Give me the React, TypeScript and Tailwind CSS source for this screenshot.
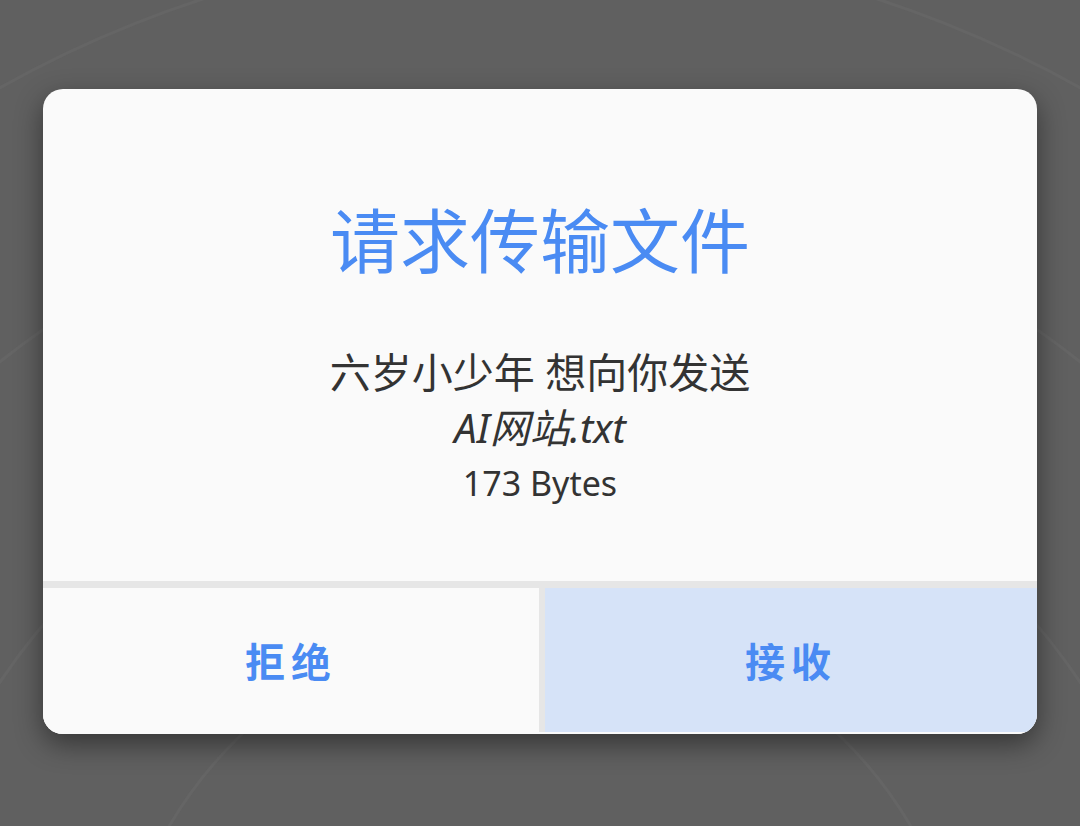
export default function App() {
  return (
    <div className="relative min-h-[826px] w-[1080px] overflow-hidden bg-[#606060] font-['Noto_Sans','Noto_Sans_CJK_SC',sans-serif]">
      {/* faint concentric rings behind the dialog */}
      <svg className="absolute inset-0" width="1080" height="826" viewBox="0 0 1080 826" fill="none">
        {[430, 650, 870, 1098].map((r) => (
          <circle key={r} cx="540" cy="1044" r={r} stroke="#656565" strokeWidth="3" />
        ))}
      </svg>

      <div className="relative pl-[43px] pt-[89px]">
        <div className="flex h-[645px] w-[994px] flex-col overflow-hidden rounded-[20px] bg-[#fafafa] shadow-[0_10px_28px_rgba(0,0,0,0.45)]">
          <div className="flex h-[492px] flex-col items-center pt-[109px]">
            <h1 className="text-[70px] leading-[80px] text-[#4a8bf3] font-['Noto_Sans_CJK_SC',sans-serif]">
              请求传输文件
            </h1>
            <div className="mt-[66px] flex flex-col items-center text-[#333333]">
              <p className="text-[41px] leading-[56px]">六岁小少年 想向你发送</p>
              <p className="text-[40px] italic leading-[56px]">AI网站.txt</p>
              <p className="text-[34px] leading-[54px]">173 Bytes</p>
            </div>
          </div>

          <div className="h-[7px] bg-[#e6e6e6]" />

          <div className="grid h-[144px] grid-cols-[496px_1fr] gap-[6px] bg-[#e6e6e6]">
            <button className="flex items-center justify-center bg-[#fafafa] text-[40px] font-bold tracking-[6px] text-[#4a8bf3] font-['Noto_Sans_CJK_SC',sans-serif]">
              拒绝
            </button>
            <button className="flex items-center justify-center bg-[#d6e3f8] text-[40px] font-bold tracking-[6px] text-[#4a8bf3] font-['Noto_Sans_CJK_SC',sans-serif]">
              接收
            </button>
          </div>

          <div className="h-[2px] bg-[#fafafa]" />
        </div>
      </div>
    </div>
  );
}
